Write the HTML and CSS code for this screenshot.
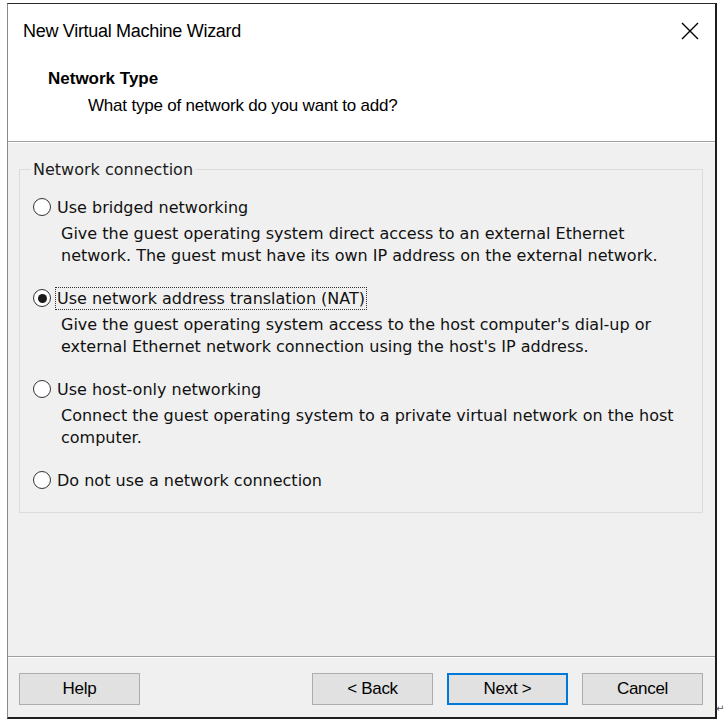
FILE: index.html
```html
<!DOCTYPE html>
<html>
<head>
<meta charset="utf-8">
<link rel="stylesheet" href="styles.css">
</head>
<body>
<div class="window">
  <div class="header">
    <div class="titlebar">
      <span class="title">New Virtual Machine Wizard</span>
      <svg class="close" width="18" height="18" viewBox="0 0 18 18"><path d="M1 1 L17 17 M17 1 L1 17" stroke="#000" stroke-width="1.4" fill="none"/></svg>
    </div>
    <div class="heading">Network Type</div>
    <div class="subheading">What type of network do you want to add?</div>
  </div>
  <div class="sep"></div>
  <div class="content">
    <fieldset class="group">
      <legend>Network connection</legend>
      <div class="option">
        <div class="radio-row"><span class="radio"></span><span class="label">Use bridged networking</span></div>
        <div class="desc">Give the guest operating system direct access to an external Ethernet<br>network. The guest must have its own IP address on the external network.</div>
      </div>
      <div class="option">
        <div class="radio-row"><span class="radio checked"></span><span class="label focus">Use network address translation (NAT)</span></div>
        <div class="desc">Give the guest operating system access to the host computer's dial-up or<br>external Ethernet network connection using the host's IP address.</div>
      </div>
      <div class="option">
        <div class="radio-row"><span class="radio"></span><span class="label">Use host-only networking</span></div>
        <div class="desc">Connect the guest operating system to a private virtual network on the host<br>computer.</div>
      </div>
      <div class="option last">
        <div class="radio-row"><span class="radio"></span><span class="label">Do not use a network connection</span></div>
      </div>
    </fieldset>
  </div>
  <div class="sep"></div>
  <div class="footer">
    <button class="btn">Help</button>
    <div class="spacer"></div>
    <button class="btn">&lt; Back</button>
    <button class="btn default">Next &gt;</button>
    <button class="btn">Cancel</button>
  </div>
</div>
<span class="para">↵</span>
</body>
</html>
```
FILE: styles.css
```css
html, body {
  margin: 0;
  padding: 0;
  background: #ffffff;
}
body {
  position: relative;
  width: 727px;
  height: 723px;
  overflow: hidden;
}
.window {
  margin: 3px 0 0 7px;
  width: 707px;
  height: 713px;
  border-top: 1px solid #2b2b2b;
  border-left: 1px solid #8a8a8a;
  border-right: 2px solid #1e1e1e;
  border-bottom: 2px solid #1e1e1e;
  background: #f0f0f0;
  display: flex;
  flex-direction: column;
  font-family: "DejaVu Sans", sans-serif;
  color: #000;
  box-sizing: content-box;
}
.header {
  background: #ffffff;
  height: 137px;
  box-sizing: border-box;
  padding: 0 0 0 15px;
  font-family: "Liberation Sans", sans-serif;
}
.titlebar {
  display: flex;
  align-items: center;
  justify-content: space-between;
  height: 52px;
}
.title {
  font-size: 18px;
  letter-spacing: -0.3px;
  margin-top: 2px;
}
.close {
  margin-right: 16px;
  margin-top: 2px;
}
.heading {
  font-weight: bold;
  font-size: 17px;
  padding-left: 25px;
  margin-top: 11px;
  line-height: 24px;
}
.subheading {
  font-size: 17px;
  padding-left: 65px;
  line-height: 30px;
  letter-spacing: -0.2px;
}
.sep {
  height: 1px;
  background: #a0a0a0;
  border-bottom: 1px solid #ffffff;
}
.content {
  padding: 17px 12px 0 11px;
  height: 513px;
  box-sizing: border-box;
}
.group {
  margin: 0;
  border: 1px solid #dcdcdc;
  padding: 16px 0 20px 13px;
  font-size: 16px;
}
.group legend {
  padding: 0 2px;
  margin-left: -2px;
  font-size: 16px;
  color: #1b1b1b;
}
.option {
  margin-bottom: 19px;
}
.option.last {
  margin-bottom: 0;
}
.radio-row {
  display: flex;
  align-items: center;
  height: 24px;
}
.radio {
  box-sizing: border-box;
  width: 18px;
  height: 18px;
  border: 1.5px solid #333;
  border-radius: 50%;
  background: #fff;
  margin-right: 4px;
  display: flex;
  align-items: center;
  justify-content: center;
  flex: none;
}
.radio.checked::after {
  content: "";
  width: 9px;
  height: 9px;
  border-radius: 50%;
  background: #1a1a1a;
}
.label {
  padding: 1px 1px;
  border: 1px dotted transparent;
  color: #111;
}
.label.focus {
  border-color: #333;
}
.desc {
  padding-left: 28px;
  line-height: 22px;
  color: #111;
  margin-top: 4px;
}
.footer {
  flex: 1;
  display: flex;
  align-items: flex-start;
  padding: 15px 12px 0 11px;
  gap: 14px;
}
.spacer {
  flex: 1;
}
.btn {
  width: 121px;
  height: 32px;
  background: #e1e1e1;
  border: 1px solid #adadad;
  font-family: "Liberation Sans", sans-serif;
  font-size: 17px;
  color: #000;
  padding: 0;
  letter-spacing: -0.3px;
}
.btn.default {
  border: 2px solid #0078d7;
}
.para {
  position: absolute;
  left: 716px;
  top: 703px;
  font-size: 10px;
  color: #555;
  font-family: "DejaVu Sans", sans-serif;
}
```
